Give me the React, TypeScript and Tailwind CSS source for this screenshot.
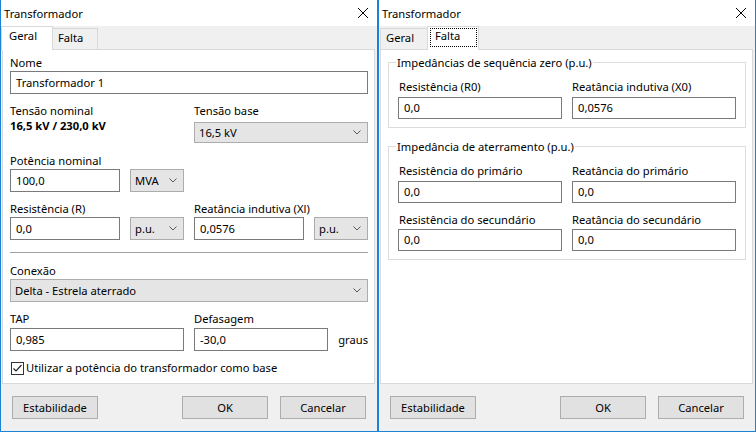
import React from "react";

const Chevron = () => (
  <svg width="8" height="5" viewBox="0 0 8 5" className="shrink-0">
    <path d="M0.5 0.5 L4 4 L7.5 0.5" fill="none" stroke="#5a5a5a" strokeWidth="1" />
  </svg>
);

const CloseX = () => (
  <svg width="10" height="10" viewBox="0 0 10 10">
    <path d="M0 0 L10 10 M10 0 L0 10" stroke="#000" strokeWidth="1" fill="none" />
  </svg>
);

function TextBox({ value, className = "", h = "h-[23px] leading-[21px]" }: { value: string; className?: string; h?: string }) {
  return <div className={`${h} border border-[#7a7a7a] bg-white pl-[5px] ${className}`}>{value}</div>;
}

function Select({ value, className = "", h = "h-[22px]" }: { value: string; className?: string; h?: string }) {
  return (
    <div className={`${h} flex items-center justify-between border border-[#acacac] bg-[#e5e5e5] pl-[4px] pr-[6px] ${className}`}>
      <span>{value}</span>
      <Chevron />
    </div>
  );
}

function Button({ label }: { label: string }) {
  return (
    <div className="flex h-[23px] w-[86px] items-center justify-center border border-[#adadad] bg-[#e1e1e1]">{label}</div>
  );
}

function Label({ children, className = "" }: { children: React.ReactNode; className?: string }) {
  return <div className={`h-[15px] leading-[15px] whitespace-nowrap ${className}`}>{children}</div>;
}

function Window({ tabs, children }: { tabs: React.ReactNode; children: React.ReactNode }) {
  return (
    <div className="flex h-[432px] w-[378px] shrink-0 flex-col border-x border-b border-[#1883d7] bg-[#f0f0f0]">
      <div className="flex h-[26px] shrink-0 items-center justify-between bg-white pl-[3px] pr-[9px]">
        <span>Transformador</span>
        <CloseX />
      </div>
      <div className="flex h-[23px] shrink-0 items-end pl-[1px]">{tabs}</div>
      <div className="ml-[1px] h-[335px] w-[373px] shrink-0 border border-[#d9d9d9] bg-white pl-[7px] pr-[6px] pt-[5px]">
        {children}
      </div>
      <div className="mt-[12px] flex justify-between pl-[11px] pr-[11px]">
        <Button label="Estabilidade" />
        <div className="flex gap-[12px]">
          <Button label="OK" />
          <Button label="Cancelar" />
        </div>
      </div>
    </div>
  );
}

function GeralPanel() {
  return (
    <div className="flex flex-col">
      <Label>Nome</Label>
      <TextBox value="Transformador 1" className="mt-[1px]" />

      <div className="mt-[9px] grid grid-cols-[174px_174px] gap-x-[10px]">
        <div>
          <Label>Tensão nominal</Label>
          <div className="h-[15px] leading-[15px] font-bold">16,5 kV / 230,0 kV</div>
        </div>
        <div>
          <Label>Tensão base</Label>
          <Select value="16,5 kV" className="mt-[4px]" h="h-[21px]" />
        </div>
      </div>

      <Label className="mt-[10px]">Potência nominal</Label>
      <div className="mt-[1px] flex gap-[10px]">
        <TextBox value="100,0" className="w-[110px]" />
        <Select value="MVA" className="w-[54px]" h="h-[23px]" />
      </div>

      <div className="mt-[9px] grid grid-cols-[174px_174px] gap-x-[10px]">
        <div>
          <Label>Resistência (R)</Label>
          <div className="mt-[1px] flex gap-[10px]">
            <TextBox value="0,0" className="w-[110px]" />
            <Select value="p.u." className="w-[54px]" h="h-[23px]" />
          </div>
        </div>
        <div>
          <Label>Reatância indutiva (Xl)</Label>
          <div className="mt-[1px] flex gap-[10px]">
            <TextBox value="0,0576" className="w-[110px]" />
            <Select value="p.u." className="w-[54px]" h="h-[23px]" />
          </div>
        </div>
      </div>

      <div className="mt-[12px] h-px bg-[#a0a0a0]" />

      <Label className="mt-[10px]">Conexão</Label>
      <Select value="Delta - Estrela aterrado" className="mt-[1px]" h="h-[23px]" />

      <div className="mt-[9px] grid grid-cols-[174px_174px] gap-x-[10px]">
        <div>
          <Label>TAP</Label>
          <TextBox value="0,985" className="mt-[2px]" />
        </div>
        <div>
          <Label>Defasagem</Label>
          <div className="mt-[2px] flex items-center gap-[10px]">
            <TextBox value="-30,0" className="w-[135px]" />
            <span>graus</span>
          </div>
        </div>
      </div>

      <div className="mt-[9px] flex items-start gap-[2px] pl-[1px]">
        <div className="mt-[2px] flex h-[13px] w-[13px] items-center justify-center border border-[#333333] bg-white">
          <svg width="11" height="11" viewBox="0 0 11 11">
            <path d="M1.5 5.5 L4 8 L9.5 2" fill="none" stroke="#222" strokeWidth="1.2" />
          </svg>
        </div>
        <span className="leading-[15px]">Utilizar a potência do transformador como base</span>
      </div>
    </div>
  );
}

function FaltaPanel() {
  return (
    <div className="flex flex-col">
      <fieldset className="border border-[#dcdcdc] px-[9px] pb-[8px]">
        <legend className="ml-[-2px] px-[1px] leading-[15px]">Impedâncias de sequência zero (p.u.)</legend>
        <div className="grid grid-cols-[164px_164px] gap-x-[10px] pt-[9px]">
          <div>
            <Label className="pl-[1px]">Resistência (R0)</Label>
            <TextBox value="0,0" className="mt-[3px]" h="h-[22px] leading-[20px]" />
          </div>
          <div>
            <Label>Reatância indutiva (X0)</Label>
            <TextBox value="0,0576" className="mt-[3px]" h="h-[22px] leading-[20px]" />
          </div>
        </div>
      </fieldset>

      <fieldset className="mt-[11px] border border-[#dcdcdc] px-[9px] pb-[8px]">
        <legend className="ml-[-2px] px-[1px] leading-[15px]">Impedância de aterramento (p.u.)</legend>
        <div className="grid grid-cols-[164px_164px] gap-x-[10px] pt-[9px]">
          <div>
            <Label className="pl-[1px]">Resistência do primário</Label>
            <TextBox value="0,0" className="mt-[3px]" h="h-[22px] leading-[20px]" />
          </div>
          <div>
            <Label>Reatância do primário</Label>
            <TextBox value="0,0" className="mt-[3px]" h="h-[22px] leading-[20px]" />
          </div>
          <div className="mt-[9px]">
            <Label className="pl-[1px]">Resistência do secundário</Label>
            <TextBox value="0,0" className="mt-[2px]" h="h-[22px] leading-[20px]" />
          </div>
          <div className="mt-[9px]">
            <Label>Reatância do secundário</Label>
            <TextBox value="0,0" className="mt-[2px]" h="h-[22px] leading-[20px]" />
          </div>
        </div>
      </fieldset>
    </div>
  );
}

export default function App() {
  return (
    <div className="flex h-[432px] w-[756px] bg-white font-['Noto_Sans',sans-serif] text-[11.2px] leading-[15px] text-black">
      <Window
        tabs={
          <>
            <div className="relative z-10 mb-[-1px] ml-[-1px] h-[24px] w-[52px] border-x border-t border-[#d9d9d9] bg-white pl-[7px] pt-[1px]">
              Geral
            </div>
            <div className="ml-[-1px] h-[21px] w-[46px] border-x border-t border-[#d9d9d9] bg-[#f0f0f0] pl-[5px] pt-[1px]">
              Falta
            </div>
          </>
        }
      >
        <GeralPanel />
      </Window>
      <Window
        tabs={
          <>
            <div className="h-[21px] w-[48px] border-x border-t border-[#d9d9d9] bg-[#f0f0f0] pl-[5px] pt-[1px]">
              Geral
            </div>
            <div className="relative z-10 mb-[-1px] ml-[-1px] h-[24px] w-[52px] border-x border-t border-[#d9d9d9] bg-white pl-[7px] pt-[1px]">
              Falta
              <div className="absolute bottom-[3px] left-[2px] right-[1px] top-[1px] border border-dotted border-black" />
            </div>
          </>
        }
      >
        <FaltaPanel />
      </Window>
    </div>
  );
}
